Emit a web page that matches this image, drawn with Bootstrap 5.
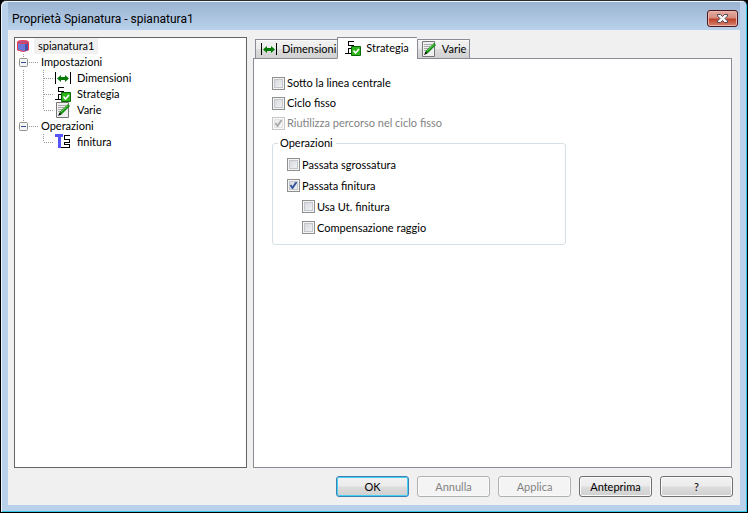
<!DOCTYPE html>
<html lang="it">
<head>
<meta charset="utf-8">
<meta name="viewport" content="width=device-width, initial-scale=1">
<title>Proprietà Spianatura - spianatura1</title>
<link href="https://cdn.jsdelivr.net/npm/bootstrap@5.3.0/dist/css/bootstrap.min.css" rel="stylesheet">
<style>
  body { background: #000; color: #000; font: 11px/16px Lato, sans-serif; }
  .dialog { background: #b9d1ea; border: 1px solid #000; border-top-color: #2b2d33; border-radius: 6px 6px 0 0; box-shadow: inset 1px 1px #eef4fa, inset -1px -1px #35c8e6; padding: 1px 7px 7px; }
  .titlebar { height: 28px; padding: 4px 2px 0 4px; background: linear-gradient(#9ab3d1, #b9d1ea); }
  .titlebar h1 { font: 12px/18px Roboto, sans-serif; }
  .close-btn { width: 31px; height: 17px; border: 1px solid #4b1620; border-radius: 3px; background: linear-gradient(#e3aca2, #d68a7c 48%, #bd3d24 52%, #d58671); box-shadow: inset 0 0 0 1px #eab5ab; }
  .client { background: #f0f0f0; padding: 7px 6px 8px; }
  .tree { width: 233px; background: #fff; border: 1px solid #646464; }
  .tree .node { height: 16px; }
  .tree .root-label { background: #f0f0f0; padding: 0 4px; margin-left: 3px; }
  .tree .group-label { padding-left: 2px; }
  .tree .leaf-icon { margin: 0 6px 0 2px; }
  svg { display: block; flex: none; }
  .pages { margin-left: 6px; }
  .tabs { padding-left: 2px; margin-bottom: -1px; }
  .tab { height: 20px; border: 1px solid #898c95; border-right: 0; border-radius: 0; padding: 0 1px 0 5px; gap: 5px; color: #000; background: linear-gradient(#f2f2f2, #ebebeb 48%, #dddddd 52%, #d0d0d0); box-shadow: inset 0 1px #fafafa; }
  .tab:last-child { border-right: 1px solid #898c95; padding: 0 3px; }
  .tab.active { height: 22px; padding: 0 8px 0 7px; background: #fff; border-bottom-color: #fff; z-index: 1; }
  .panel { background: #fff; border: 1px solid #898c95; margin-right: 2px; padding: 14px 18px; }
  .opt { height: 20px; gap: 2px; }
  .opt input { appearance: none; flex: none; width: 13px; height: 13px; margin: 0; border: 1px solid #8e8f8f; box-shadow: inset 0 0 0 1px #f4f4f4, inset 0 0 0 2px #c3c7cc; background: linear-gradient(135deg, #cfd3d9, #f6f6f6); }
  .opt input:checked { background: url("data:image/svg+xml,%3Csvg xmlns='http://www.w3.org/2000/svg' viewBox='0 0 11 11'%3E%3Cpath d='M2.500 5 4.500 8 8.500 2' fill='none' stroke='%233a559f' stroke-width='2'/%3E%3C/svg%3E") center/11px no-repeat, linear-gradient(135deg, #cfd3d9, #f6f6f6); }
  .opt input:disabled { filter: grayscale(1) opacity(.5); }
  .opt input:disabled + label { color: #838383; }
  .group { max-width: 294px; border: 1px solid #d5dfe5; border-radius: 3px; margin-top: 2px; padding: 3px 14px 6px; }
  .group legend { float: none; width: auto; font-size: 11px; line-height: 16px; margin: 0 0 0 -9px; padding: 0 3px 0 2px; }
  .group .opt { height: 21px; }
  .sub { padding-left: 15px; }
  .actions { gap: 8px; padding: 8px 0 0; margin-right: 1px; }
  .cmd { width: 73px; height: 21px; padding: 0; font-size: 11px; line-height: 16px; color: #000; border: 1px solid #707070; border-radius: 3px; background: linear-gradient(#f2f2f2, #ebebeb 48%, #dddddd 52%, #cfcfcf); box-shadow: inset 0 0 0 1px #fafafa; }
  .cmd.default { border-color: #3c7fb1; box-shadow: inset 0 0 0 1px #46d0f5; }
  .cmd:disabled { opacity: 1; color: #838383; border-color: #adb2b5; background: #f4f4f4; }
</style>
<script src="https://cdn.jsdelivr.net/npm/bootstrap@5.3.0/dist/js/bootstrap.bundle.min.js"></script>
</head>
<body>
<svg width="0" height="0" class="position-absolute" aria-hidden="true">
  <defs>
    <symbol id="i-dim" viewBox="0 0 16 16"><path d="M.5 2v12M15.500 2v12" stroke="#000"/><path d="M2 8.500 6 5v2h4V5l4 3.500-4 3.500v-2H6v2z" fill="#067a06"/></symbol>
    <symbol id="i-path" viewBox="0 0 16 16"><path d="M9 1.500H3.500v4h5v3h-5v5M0 13.500h7" fill="none" stroke="#000" shape-rendering="crispEdges"/><path d="M6.500 6.500h9v9h-9z" fill="#2fb51c" stroke="#0a6a06"/><path d="m8.500 10.500 2 2.500 3.500-4" fill="none" stroke="#fff" stroke-width="1.600"/></symbol>
    <symbol id="i-note" viewBox="0 0 16 16"><path d="M1.500 .5v15h12V.5z" fill="#efefef" stroke="#777"/><path d="M3 3.500h8M3 5.500h6M3 7.500h5M3 9.500h3" stroke="#aaa"/><path d="m4 13 1-3.500L13 2l2 2-8 8z" fill="#168a16"/><path d="m6 10 7-6.500" stroke="#6ddc55"/><path d="m3 14 1.500-3.500 2 2z" fill="#111"/></symbol>
    <symbol id="i-fin" viewBox="0 0 16 16"><path d="M0 0h8v3H6v11H3V3H0z" fill="#5555fa"/><path d="M15 1.500H9.500v4h5v3h-5v2h5v3H6" fill="none" stroke="#000" shape-rendering="crispEdges"/></symbol>
    <symbol id="l-branch" viewBox="0 0 38 16"><path d="M8.500 0v16M28.500 0v16M29 8.500h9" stroke="#999" stroke-dasharray="1 1"/></symbol>
    <symbol id="l-last" viewBox="0 0 38 16"><path d="M8.500 0v16M28.500 0v8M29 8.500h9" stroke="#999" stroke-dasharray="1 1"/></symbol>
    <symbol id="l-end" viewBox="0 0 38 16"><path d="M28.500 0v8M29 8.500h9" stroke="#999" stroke-dasharray="1 1"/></symbol>
    <symbol id="l-box" viewBox="0 0 24 16"><path d="M8.500 0v4M14 8.500h10" stroke="#999" stroke-dasharray="1 1"/><rect x="4.500" y="4.500" width="8" height="8" rx="1" fill="#f4f4f4" stroke="#919191"/><path d="M6 8.500h5" stroke="#3350a0"/></symbol>
  </defs>
</svg>
<main class="dialog d-flex flex-column vh-100">
  <header class="titlebar d-flex justify-content-between">
    <h1 class="m-0 pt-1">Proprietà Spianatura - spianatura1</h1>
    <button type="button" class="close-btn p-0 mt-1 d-flex align-items-center justify-content-center" aria-label="Chiudi"><svg width="13" height="11" viewBox="0 0 13 11"><path d="M1.500 1.500h3l2 2 2-2h3v1.500L9 5.500l2.500 2.500v1.500h-3l-2-2-2 2h-3V8L4 5.500 1.500 3z" fill="#f5f5f5" stroke="#4d4553"/></svg></button>
  </header>
  <div class="client d-flex flex-column flex-grow-1">
    <div class="d-flex flex-grow-1">
      <nav class="tree flex-shrink-0" aria-label="Proprietà">
        <ul class="list-unstyled m-0">
          <li><div class="node d-flex"><svg width="16" height="16" viewBox="0 0 16 16"><path d="M2.500 4v8q6 3 11 0V4" fill="#6a78d8" stroke="#f03c50"/><path d="M10 4h3v8l-3 1z" fill="#4c50a8"/><ellipse cx="8" cy="4" rx="5.500" ry="1.500" fill="#b2508a" stroke="#f03c50"/></svg><span class="root-label">spianatura1</span></div>
            <ul class="list-unstyled m-0">
              <li><div class="node d-flex"><svg width="24" height="16"><use href="#l-box"/></svg><span class="group-label">Impostazioni</span></div>
                <ul class="list-unstyled m-0">
                  <li class="node d-flex"><svg width="38" height="16"><use href="#l-branch"/></svg><svg class="leaf-icon" width="16" height="16"><use href="#i-dim"/></svg>Dimensioni</li>
                  <li class="node d-flex"><svg width="38" height="16"><use href="#l-branch"/></svg><svg class="leaf-icon" width="16" height="16"><use href="#i-path"/></svg>Strategia</li>
                  <li class="node d-flex"><svg width="38" height="16"><use href="#l-last"/></svg><svg class="leaf-icon" width="16" height="16"><use href="#i-note"/></svg>Varie</li>
                </ul>
              </li>
              <li><div class="node d-flex"><svg width="24" height="16"><use href="#l-box"/></svg><span class="group-label">Operazioni</span></div>
                <ul class="list-unstyled m-0">
                  <li class="node d-flex"><svg width="38" height="16"><use href="#l-end"/></svg><svg class="leaf-icon" width="16" height="16"><use href="#i-fin"/></svg>finitura</li>
                </ul>
              </li>
            </ul>
          </li>
        </ul>
      </nav>
      <section class="pages d-flex flex-column flex-grow-1">
        <div class="tabs d-flex align-items-end" role="tablist">
          <button type="button" role="tab" class="tab d-flex align-items-center"><svg width="16" height="16"><use href="#i-dim"/></svg>Dimensioni</button>
          <button type="button" role="tab" aria-selected="true" class="tab active d-flex align-items-center"><svg width="16" height="16"><use href="#i-path"/></svg>Strategia</button>
          <button type="button" role="tab" class="tab d-flex align-items-center"><svg width="16" height="16"><use href="#i-note"/></svg>Varie</button>
        </div>
        <div class="panel flex-grow-1" role="tabpanel">
          <div class="opt d-flex align-items-center"><input type="checkbox" id="c1"><label for="c1">Sotto la linea centrale</label></div>
          <div class="opt d-flex align-items-center"><input type="checkbox" id="c2"><label for="c2">Ciclo fisso</label></div>
          <div class="opt d-flex align-items-center"><input type="checkbox" id="c3" checked disabled><label for="c3">Riutilizza percorso nel ciclo fisso</label></div>
          <fieldset class="group">
            <legend>Operazioni</legend>
            <div class="opt d-flex align-items-center"><input type="checkbox" id="c4"><label for="c4">Passata sgrossatura</label></div>
            <div class="opt d-flex align-items-center"><input type="checkbox" id="c5" checked><label for="c5">Passata finitura</label></div>
            <div class="opt sub d-flex align-items-center"><input type="checkbox" id="c6"><label for="c6">Usa Ut. finitura</label></div>
            <div class="opt sub d-flex align-items-center"><input type="checkbox" id="c7"><label for="c7">Compensazione raggio</label></div>
          </fieldset>
        </div>
      </section>
    </div>
    <footer class="actions d-flex justify-content-end">
      <button type="button" class="btn cmd default">OK</button>
      <button type="button" class="btn cmd" disabled>Annulla</button>
      <button type="button" class="btn cmd" disabled>Applica</button>
      <button type="button" class="btn cmd">Anteprima</button>
      <button type="button" class="btn cmd">?</button>
    </footer>
  </div>
</main>
</body>
</html>
